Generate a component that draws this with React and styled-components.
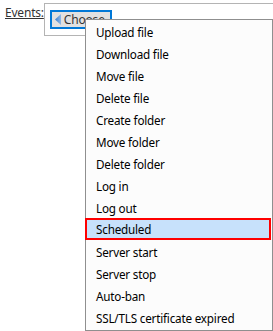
import React from 'react';
import styled, { createGlobalStyle } from 'styled-components';

const GlobalStyle = createGlobalStyle`
  html, body {
    margin: 0;
    padding: 0;
    background: #ffffff;
    font-family: "Noto Sans", "Open Sans", sans-serif;
    font-size: 12px;
    color: #1a1a1a;
  }
  body { overflow: hidden; }
`;

const Page = styled.div`
  position: relative;
  width: 273px;
  height: 331px;
  overflow: hidden;
`;

const FieldRow = styled.div`
  display: flex;
  align-items: flex-start;
  padding-top: 3px;
`;

const Label = styled.span`
  width: 49px;
  padding: 3px 0 0 5px;
  box-sizing: border-box;
  color: #333;
  text-decoration: underline;
  line-height: 14px;
  letter-spacing: -0.2px;
`;

const Field = styled.div`
  flex: none;
  width: 240px;
  height: 33px;
  box-sizing: border-box;
  border: 1px solid #b4b4b4;
  padding: 6px 0 0 5px;
`;

const ChooseButton = styled.div`
  display: inline-flex;
  align-items: center;
  gap: 3px;
  width: 62px;
  height: 19px;
  box-sizing: border-box;
  border: 2px solid #0078d7;
  background: #e1e1e1;
  padding-left: 3px;
  color: #333;
  line-height: 14px;
  letter-spacing: -0.2px;
`;

const Menu = styled.ul`
  position: absolute;
  left: 85px;
  top: 19px;
  width: 188px;
  margin: 0;
  padding: 0 0 2px;
  list-style: none;
  box-sizing: border-box;
  background: #fcfcfc;
  border: 1px solid #8f8f8f;
`;

const Item = styled.li`
  height: 22px;
  padding-top: 3px;
  line-height: 19px;
  box-sizing: border-box;
  padding-left: 10px;
  white-space: nowrap;
  color: #000;
  font-size: 11.7px;
  letter-spacing: -0.2px;
  ${p => p.$active && `
    margin: 0 1px 0 -1px;
    padding-left: 9px;
    padding-top: 1px;
    line-height: 17px;
    background: #c7e1fb;
    border: 2px solid #ff0000;
  `}
`;

const items = [
  'Upload file',
  'Download file',
  'Move file',
  'Delete file',
  'Create folder',
  'Move folder',
  'Delete folder',
  'Log in',
  'Log out',
  'Scheduled',
  'Server start',
  'Server stop',
  'Auto-ban',
  'SSL/TLS certificate expired',
];

export default function App() {
  return (
    <Page>
      <GlobalStyle />
      <FieldRow>
        <Label>Events:</Label>
        <Field>
          <ChooseButton>
            <svg width="6" height="11" viewBox="0 0 6 11">
              <defs>
                <linearGradient id="arr" x1="0" y1="0" x2="1" y2="0">
                  <stop offset="0" stopColor="#3a7fd0" />
                  <stop offset="1" stopColor="#8fb8e6" />
                </linearGradient>
              </defs>
              <path d="M6 0 L0 5.5 L6 11 Z" fill="url(#arr)" />
            </svg>
            Choose
          </ChooseButton>
        </Field>
      </FieldRow>
      <Menu>
        {items.map(name => (
          <Item key={name} $active={name === 'Scheduled'}>{name}</Item>
        ))}
      </Menu>
    </Page>
  );
}
